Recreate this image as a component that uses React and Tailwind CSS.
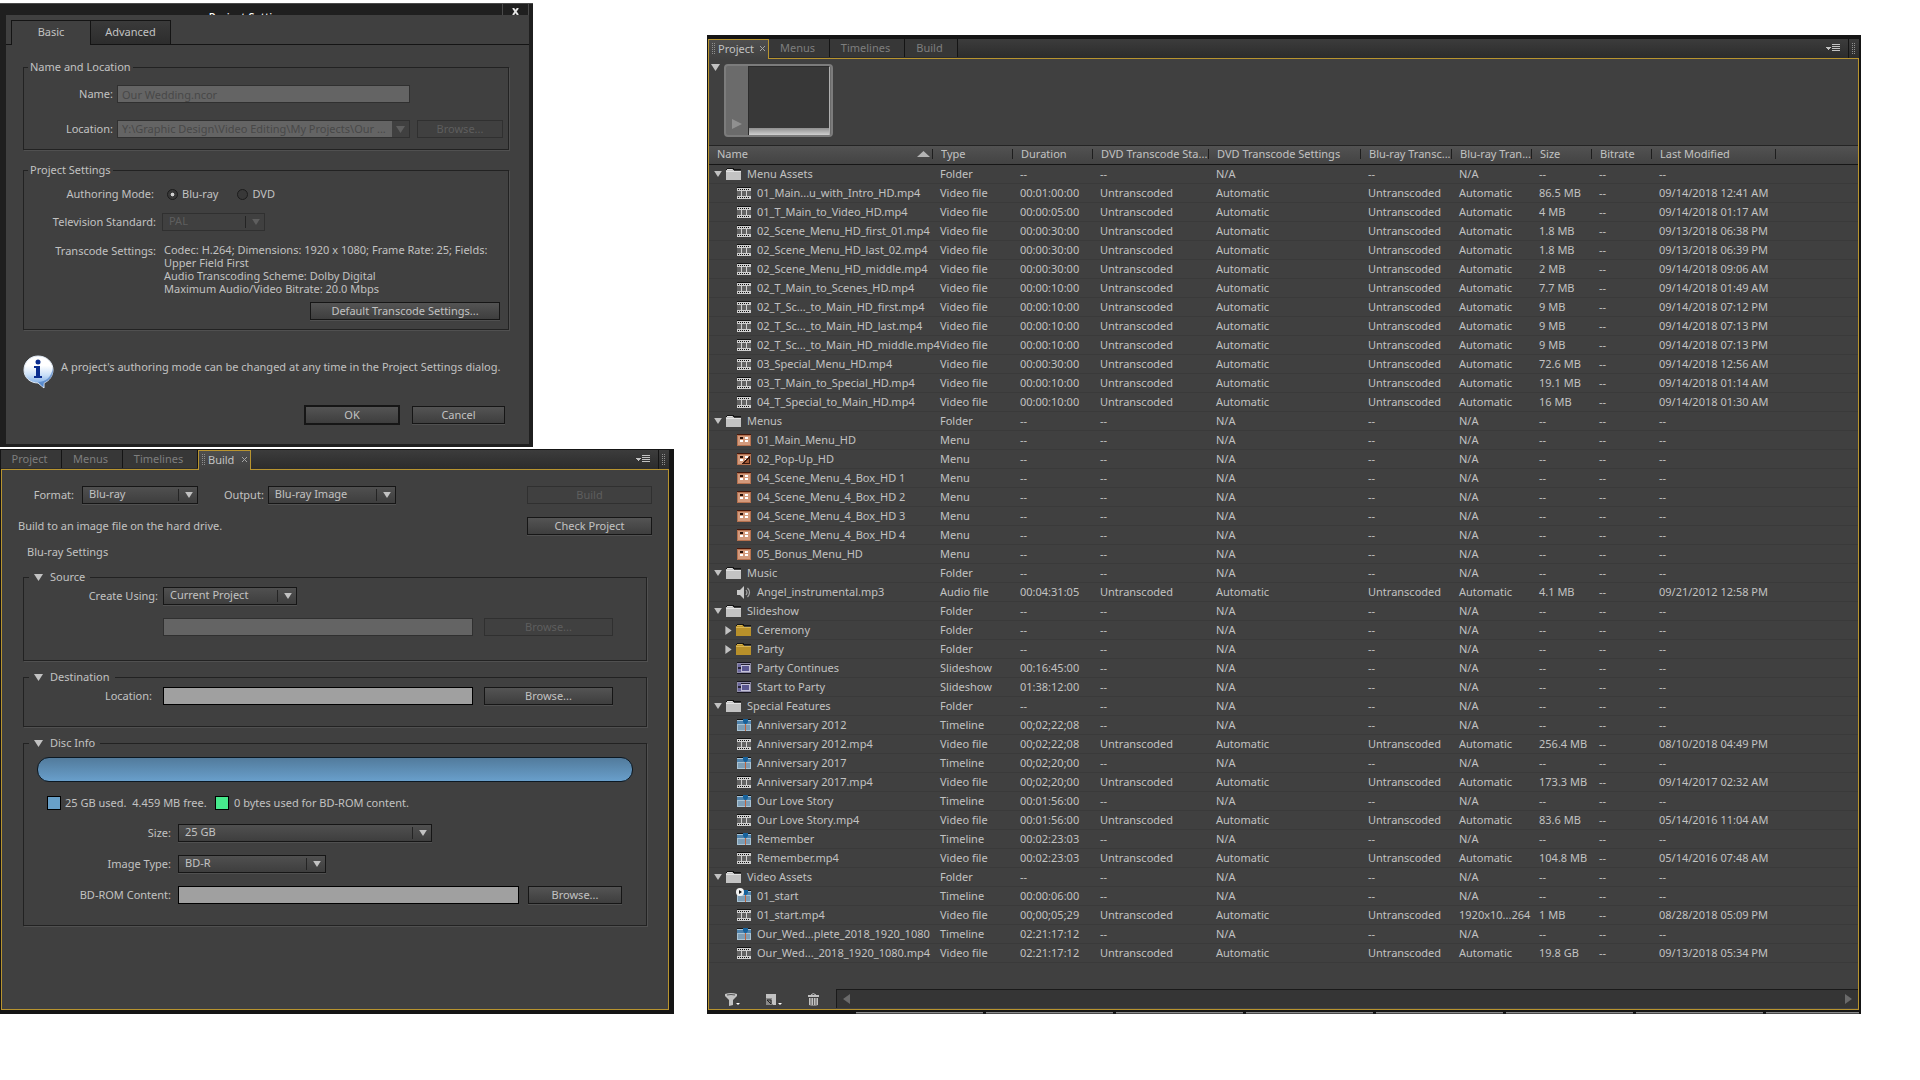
const assets = [
  { kind: 'folder', name: 'Menu Assets' },
  { kind: 'video', name: '01_Main...u_with_Intro_HD.mp4', duration: '00:01:00:00', size: '86.5 MB', modified: '09/14/2018 12:41 AM' },
  { kind: 'video', name: '01_T_Main_to_Video_HD.mp4', duration: '00:00:05:00', size: '4 MB', modified: '09/14/2018 01:17 AM' },
  { kind: 'video', name: '02_Scene_Menu_HD_first_01.mp4', duration: '00:00:30:00', size: '1.8 MB', modified: '09/13/2018 06:38 PM' },
  { kind: 'video', name: '02_Scene_Menu_HD_last_02.mp4', duration: '00:00:30:00', size: '1.8 MB', modified: '09/13/2018 06:39 PM' },
  { kind: 'video', name: '02_Scene_Menu_HD_middle.mp4', duration: '00:00:30:00', size: '2 MB', modified: '09/14/2018 09:06 AM' },
  { kind: 'video', name: '02_T_Main_to_Scenes_HD.mp4', duration: '00:00:10:00', size: '7.7 MB', modified: '09/14/2018 01:49 AM' },
  { kind: 'video', name: '02_T_Sc..._to_Main_HD_first.mp4', duration: '00:00:10:00', size: '9 MB', modified: '09/14/2018 07:12 PM' },
  { kind: 'video', name: '02_T_Sc..._to_Main_HD_last.mp4', duration: '00:00:10:00', size: '9 MB', modified: '09/14/2018 07:13 PM' },
  { kind: 'video', name: '02_T_Sc..._to_Main_HD_middle.mp4', duration: '00:00:10:00', size: '9 MB', modified: '09/14/2018 07:13 PM' },
  { kind: 'video', name: '03_Special_Menu_HD.mp4', duration: '00:00:30:00', size: '72.6 MB', modified: '09/14/2018 12:56 AM' },
  { kind: 'video', name: '03_T_Main_to_Special_HD.mp4', duration: '00:00:10:00', size: '19.1 MB', modified: '09/14/2018 01:14 AM' },
  { kind: 'video', name: '04_T_Special_to_Main_HD.mp4', duration: '00:00:10:00', size: '16 MB', modified: '09/14/2018 01:30 AM' },
  { kind: 'folder', name: 'Menus' },
  { kind: 'menu', name: '01_Main_Menu_HD' },
  { kind: 'popup', name: '02_Pop-Up_HD' },
  { kind: 'menu', name: '04_Scene_Menu_4_Box_HD 1' },
  { kind: 'menu', name: '04_Scene_Menu_4_Box_HD 2' },
  { kind: 'menu', name: '04_Scene_Menu_4_Box_HD 3' },
  { kind: 'menu', name: '04_Scene_Menu_4_Box_HD 4' },
  { kind: 'menu', name: '05_Bonus_Menu_HD' },
  { kind: 'folder', name: 'Music' },
  { kind: 'audio', name: 'Angel_instrumental.mp3', duration: '00:04:31:05', size: '4.1 MB', modified: '09/21/2012 12:58 PM' },
  { kind: 'folder', name: 'Slideshow' },
  { kind: 'subfolder', name: 'Ceremony' },
  { kind: 'subfolder', name: 'Party' },
  { kind: 'slideshow', name: 'Party Continues', duration: '00:16:45:00' },
  { kind: 'slideshow', name: 'Start to Party', duration: '01:38:12:00' },
  { kind: 'folder', name: 'Special Features' },
  { kind: 'timeline', name: 'Anniversary 2012', duration: '00;02;22;08' },
  { kind: 'video', name: 'Anniversary 2012.mp4', duration: '00;02;22;08', size: '256.4 MB', modified: '08/10/2018 04:49 PM' },
  { kind: 'timeline', name: 'Anniversary 2017', duration: '00;02;20;00' },
  { kind: 'video', name: 'Anniversary 2017.mp4', duration: '00;02;20;00', size: '173.3 MB', modified: '09/14/2017 02:32 AM' },
  { kind: 'timeline', name: 'Our Love Story', duration: '00:01:56:00' },
  { kind: 'video', name: 'Our Love Story.mp4', duration: '00:01:56:00', size: '83.6 MB', modified: '05/14/2016 11:04 AM' },
  { kind: 'timeline', name: 'Remember', duration: '00:02:23:03' },
  { kind: 'video', name: 'Remember.mp4', duration: '00:02:23:03', size: '104.8 MB', modified: '05/14/2016 07:48 AM' },
  { kind: 'folder', name: 'Video Assets' },
  { kind: 'firstplay', name: '01_start', duration: '00:00:06:00' },
  { kind: 'video', name: '01_start.mp4', duration: '00;00;05;29', bluray: '1920x10...264', size: '1 MB', modified: '08/28/2018 05:09 PM' },
  { kind: 'timeline', name: 'Our_Wed...plete_2018_1920_1080', duration: '02:21:17:12' },
  { kind: 'video', name: 'Our_Wed..._2018_1920_1080.mp4', duration: '02:21:17:12', size: '19.8 GB', modified: '09/13/2018 05:34 PM' },
]

const typeLabels = {
  folder: 'Folder',
  subfolder: 'Folder',
  video: 'Video file',
  audio: 'Audio file',
  menu: 'Menu',
  popup: 'Menu',
  slideshow: 'Slideshow',
  timeline: 'Timeline',
  firstplay: 'Timeline',
}

const columns = [
  { label: 'Name', width: 'w-[224px]' },
  { label: 'Type', width: 'w-[80px]' },
  { label: 'Duration', width: 'w-[80px]' },
  { label: 'DVD Transcode Sta...', width: 'w-[116px]' },
  { label: 'DVD Transcode Settings', width: 'w-[152px]' },
  { label: 'Blu-ray Transc...', width: 'w-[91px]' },
  { label: 'Blu-ray Tran...', width: 'w-[80px]' },
  { label: 'Size', width: 'w-[60px]' },
  { label: 'Bitrate', width: 'w-[60px]' },
  { label: 'Last Modified', width: 'w-[124px]' },
]

function FolderIcon({ dark, light }) {
  return (
    <svg width="16" height="13" viewBox="0 0 16 13" shapeRendering="crispEdges">
      <path d="M1 0h6l1 1h7v1H0V1z" fill="#151515" />
      <path d="M1 1h6l1 2h7v9H0V2z" fill={dark} />
      <path d="M1 1h5v1H1zM0 3h15v1H0z" fill={light} />
    </svg>
  )
}

function VideoIcon() {
  return (
    <svg width="14" height="13" viewBox="0 0 14 13" shapeRendering="crispEdges">
      <path d="M0 0h14v1H0z" fill="#151515" />
      <path d="M0 1h14v11H0z" fill="#cfcfcf" />
      <path d="M1 2h1v1H1zM3 2h1v1H3zM5 2h1v1H5zM7 2h1v1H7zM9 2h1v1H9zM11 2h1v1h-1zM1 10h1v1H1zM3 10h1v1H3zM5 10h1v1H5zM7 10h1v1H7zM9 10h1v1H9zM11 10h1v1h-1z" fill="#111" />
      <path d="M0 4h4v5H0zM5 4h4v5H5zM10 4h4v5h-4z" fill="#626262" />
    </svg>
  )
}

function MenuIcon({ popup }) {
  return (
    <svg width="14" height="12" viewBox="0 0 14 12" shapeRendering="crispEdges">
      <path d="M0 0h14v12H0z" fill="#b5714f" />
      <path d="M0 0h14v1H0z" fill="#45180c" />
      <path d="M1 2h12v9H1z" fill="#d39a7c" />
      <path d="M3 3h3v2H3z" fill="#2a1008" />
      <path d="M8 3h3v2H8zM3 6h3v2H3zM8 6h3v2H8z" fill="#fff" />
      {popup && (
        <>
          <path d="M13 2v9H5z" fill="#3b1a10" />
          <path d="M12 5v5H7z" fill="#a35c38" />
        </>
      )}
    </svg>
  )
}

function AudioIcon() {
  return (
    <svg width="14" height="13" viewBox="0 0 14 13">
      <path d="M0 4h3l4-4v13L3 9H0z" fill="#c9c9c9" />
      <path d="M9 4q2 2.500 0 5M10.500 2q4 4.500 0 9" fill="none" stroke="#a8a8a8" strokeWidth="1.200" />
    </svg>
  )
}

function SlideshowIcon() {
  return (
    <svg width="14" height="12" viewBox="0 0 14 12" shapeRendering="crispEdges">
      <path d="M0 0h14v12H0z" fill="#17151f" />
      <path d="M0 1h14v10H0z" fill="#8e8ba6" />
      <path d="M1 2h12v8H1z" fill="#252234" />
      <path d="M1 2h3v3H1zM1 7h3v3H1z" fill="#6d69a0" />
      <path d="M4 3h9v7H4z" fill="#c4c1d8" />
      <path d="M5 4h7v5H5z" fill="#5a5690" />
    </svg>
  )
}

function TimelineIcon({ firstPlay }) {
  return (
    <svg width="14" height="13" viewBox="0 0 14 13" overflow="visible">
      <path d="M0 0h14v1H0z" fill="#151515" />
      <path d="M0 1h14v11H0z" fill="#a9c3d4" />
      <path d="M0 2h14v3H0z" fill="#4f83ad" />
      <path d="M1 6h12v5H1z" fill="#7d9db5" />
      <path d="M6 0h5v3L9 5.500H8L6 3z" fill="#17629c" />
      <path d="M8 5h1v7H8z" fill="#c0623b" />
      {firstPlay && (
        <>
          <circle cx="3" cy="2" r="4" fill="#f2f2f2" />
          <path d="M2 0l3 2-3 2z" fill="#111" />
        </>
      )}
    </svg>
  )
}

function AssetIcon({ kind }) {
  if (kind === 'folder') return <FolderIcon dark="#c3c3c3" light="#e2e2e2" />
  if (kind === 'subfolder') return <FolderIcon dark="#b8902a" light="#d8b552" />
  if (kind === 'video') return <VideoIcon />
  if (kind === 'audio') return <AudioIcon />
  if (kind === 'slideshow') return <SlideshowIcon />
  if (kind === 'menu' || kind === 'popup') return <MenuIcon popup={kind === 'popup'} />
  return <TimelineIcon firstPlay={kind === 'firstplay'} />
}

function InfoIcon() {
  return (
    <svg width="32" height="34" viewBox="0 0 32 34" className="shrink-0">
      <defs>
        <linearGradient id="bubble" x1="0" y1="0" x2="0" y2="1">
          <stop offset="0.300" stopColor="#ffffff" />
          <stop offset="0.600" stopColor="#c9dff7" />
          <stop offset="1" stopColor="#5b95dd" />
        </linearGradient>
      </defs>
      <path
        d="M15 1c8.500 0 15 6 15 14 0 6-4 11-9 13v5l-6-5C7 28 1 22.500 1 15 1 7 7 1 15 1z"
        fill="url(#bubble)"
        stroke="#dfe9f5"
        strokeWidth="1"
      />
      <path d="M30 13c1 8-3 12-9 15l-1 4-5-5c8 0 13-5 15-14z" fill="#3f73bd" opacity="0.600" />
      <circle cx="15" cy="7" r="2.500" fill="#0b2e8f" />
      <path d="M11 11h6v10h2v2h-8v-2h2v-8h-2z" fill="#0b2e8f" />
    </svg>
  )
}

function Triangle({ className }) {
  return (
    <svg width="9" height="7" viewBox="0 0 9 7" className={className}>
      <path d="M0 0h9L4.500 7z" fill="currentColor" />
    </svg>
  )
}

function TriangleRight({ className }) {
  return (
    <svg width="7" height="10" viewBox="0 0 7 10" className={className}>
      <path d="M0 0v10l7-5z" fill="currentColor" />
    </svg>
  )
}

function Grip() {
  return (
    <svg width="4" height="12" viewBox="0 0 4 12" shapeRendering="crispEdges" className="shrink-0">
      <path d="M0 0h1v1H0zM2 0h1v1H2zM0 2h1v1H0zM2 2h1v1H2zM0 4h1v1H0zM2 4h1v1H2zM0 6h1v1H0zM2 6h1v1H2zM0 8h1v1H0zM2 8h1v1H2zM0 10h1v1H0zM2 10h1v1H2z" fill="#8f8f8f" />
    </svg>
  )
}

function Button({ className, children, disabled }) {
  return (
    <button
      type="button"
      disabled={disabled}
      className={`shrink-0 border text-center leading-[14px] ${
        disabled
          ? 'border-[#303030] text-[#5e5e5e]'
          : 'border-[#161616] bg-linear-to-b from-[#545454] to-[#3e3e3e] text-[#c2c2c2] shadow-[0_1px_0_#505050]'
      } ${className}`}
    >
      {children}
    </button>
  )
}

function Select({ id, value, className, disabled }) {
  return (
    <div className={`relative h-[18px] shrink-0 ${disabled ? 'text-[#5e5e5e]' : 'text-[#c2c2c2]'} ${className}`}>
      <select
        id={id}
        disabled={disabled}
        defaultValue={value}
        className={`block h-full w-full appearance-none border pb-[2px] pl-[6px] leading-[14px] ${
          disabled ? 'border-[#303030] opacity-100' : 'border-[#161616] bg-linear-to-b from-[#505050] to-[#3e3e3e] shadow-[0_1px_0_#505050]'
        }`}
      >
        <option>{value}</option>
      </select>
      <span className="pointer-events-none absolute inset-y-[3px] right-[5px] flex items-center border-l border-[#242424] pl-[6px]">
        <Triangle className="h-[6px] w-[8px]" />
      </span>
    </div>
  )
}

function TextField({ id, label, className, disabled, value }) {
  return (
    <input
      id={id}
      type="text"
      aria-label={label}
      disabled={disabled}
      defaultValue={value}
      className={`block h-[18px] border px-[4px] leading-4 ${
        disabled ? 'border-[#303030] bg-[#646464] text-[#484848]' : 'border-black bg-[#a0a0a0] text-black'
      } ${className}`}
    />
  )
}

function Group({ title, className, children }) {
  return (
    <fieldset className={`border border-[#222] shadow-[1px_1px_0_#505050] ${className}`}>
      <legend className="ml-[5px] h-4 px-[5px] leading-4">
        <button type="button" className="flex items-center gap-[7px]">
          <Triangle />
          {title}
        </button>
      </legend>
      {children}
    </fieldset>
  )
}

function TabBar({ active }) {
  const tabs = [
    { label: 'Project', width: 'w-[61px]' },
    { label: 'Menus', width: 'w-[61px]' },
    { label: 'Timelines', width: 'w-[75px]' },
    { label: 'Build', width: 'w-[53px]' },
  ]

  return (
    <div className="flex h-[19px] bg-linear-to-b from-[#3c3c3c] to-[#2c2c2c]">
      <div role="tablist" className="flex">
        {tabs.map(({ label, width }) =>
          label === active ? (
            <div key={label} className={`relative z-10 -mb-px flex items-center gap-[2px] border border-b-0 border-[#b8942f] bg-linear-to-b from-[#4e4e4e] to-[#404040] px-[3px] pb-[2px] ${width}`}>
              <Grip />
              <button type="button" role="tab" aria-selected="true">
                {label}
              </button>
              <button type="button" aria-label={`Close ${label}`} className="ml-auto text-[#a5a5a5]">
                <svg width="5" height="5" viewBox="0 0 5 5">
                  <path d="M0 0l5 5M5 0l-5 5" stroke="currentColor" />
                </svg>
              </button>
            </div>
          ) : (
            <button key={label} type="button" role="tab" aria-selected="false" className={`mb-px border-r border-[#141414] bg-[#373737] pr-[3px] text-[#7e7e7e] ${width}`}>
              {label}
            </button>
          ),
        )}
      </div>
      <button type="button" aria-label="Panel menu" className="mr-[8px] ml-auto text-[#c2c2c2]">
        <svg width="14" height="9" viewBox="0 0 14 9" shapeRendering="crispEdges">
          <path d="M0 3h5L2.500 6zM6 0h8v1H6zM6 2h8v1H6zM6 4h8v1H6zM6 6h8v1H6z" fill="currentColor" />
        </svg>
      </button>
      <div className="flex w-[11px] items-center justify-center border-l border-[#141414]">
        <Grip />
      </div>
    </div>
  )
}

function ProjectSettings() {
  return (
    <section className="w-[533px] max-w-full border-t border-[#4a4a4a] bg-[#1f1f1f] pr-[4px] pb-[3px] pl-[6px]">
      <header className="flex h-[11px] overflow-hidden">
        <h1 className="flex-1 pt-[5px] pr-2 text-center leading-4 font-medium text-white">Project Settings</h1>
        <button type="button" aria-label="Close" className="flex w-[27px] justify-center border-x border-[#4a4a4a] pt-[4px]">
          <svg width="8" height="8" viewBox="0 0 8 8">
            <path d="M1 0l5 7M6 0L1 7" stroke="#e4e4e4" strokeWidth="2" />
          </svg>
        </button>
      </header>

      <form className="bg-[#404040] pb-5">
        <div role="tablist" className="flex border-b border-[#141414] pt-[5px] pl-[5px]">
          <button type="button" role="tab" aria-selected="true" className="-mb-px h-[25px] w-[80px] border-x border-t border-[#141414] bg-[#404040] pb-[2px]">
            Basic
          </button>
          <button type="button" role="tab" aria-selected="false" className="h-[24px] w-[80px] border-t border-r border-[#141414] bg-linear-to-b from-[#3a3a3a] to-[#2d2d2d] pb-px">
            Advanced
          </button>
        </div>

        <div className="pt-[14px] pr-5 pl-[17px]">
          <fieldset className="border border-[#222] pb-[11px] shadow-[1px_1px_0_#505050]">
            <legend className="ml-[4px] h-4 px-[2px] leading-4">Name and Location</legend>
            <div className="flex items-center gap-1 pt-[10px]">
              <label htmlFor="project-name" className="w-[89px] text-right">Name:</label>
              <TextField id="project-name" value="Our Wedding.ncor" disabled className="w-[293px]" />
            </div>
            <div className="flex items-center gap-1 pt-[17px]">
              <label htmlFor="project-location" className="w-[89px] text-right">Location:</label>
              <div className="relative h-[18px] w-[293px] text-[#5e5e5e]">
                <select
                  id="project-location"
                  disabled
                  className="block h-full w-full appearance-none border border-[#303030] bg-linear-to-r from-[#646464] from-94% to-[#404040] to-94% pl-[4px] leading-4 text-[#484848] opacity-100"
                >
                  <option>Y:\Graphic Design\Video Editing\My Projects\Our ...</option>
                </select>
                <Triangle className="pointer-events-none absolute top-[6px] right-[5px]" />
              </div>
              <Button disabled className="ml-[3px] h-[18px] w-[86px]">Browse...</Button>
            </div>
          </fieldset>

          <fieldset className="mt-[12px] border border-[#222] pr-[8px] pb-[9px] shadow-[1px_1px_0_#505050]">
            <legend className="ml-[4px] h-4 px-[2px] leading-4">Project Settings</legend>
            <div role="radiogroup" aria-labelledby="authoring-mode" className="mt-[8px] flex h-4 items-center">
              <span id="authoring-mode" className="w-[130px] text-right">Authoring Mode:</span>
              <label className="ml-[13px] flex items-center gap-1">
                <input type="radio" name="mode" defaultChecked className="size-[11px] appearance-none rounded-full border border-[#1c1c1c] bg-[#363636] bg-radial from-[#d0d0d0] from-25% to-[#383838] to-35%" />
                Blu-ray
              </label>
              <label className="ml-[19px] flex items-center gap-1">
                <input type="radio" name="mode" className="size-[11px] appearance-none rounded-full border border-[#1c1c1c] bg-[#383838]" />
                DVD
              </label>
            </div>
            <div className="flex items-center gap-[6px] pt-[11px]">
              <label htmlFor="tv-standard" className="w-[132px] text-right">Television Standard:</label>
              <Select id="tv-standard" value="PAL" disabled className="w-[103px]" />
            </div>
            <div className="flex gap-[8px] pt-[12px] leading-[13px]">
              <span className="w-[132px] shrink-0 pt-px text-right">Transcode Settings:</span>
              <p>
                Codec: H.264; Dimensions: 1920 x 1080; Frame Rate: 25; Fields:<br />
                Upper Field First<br />
                Audio Transcoding Scheme: Dolby Digital<br />
                Maximum Audio/Video Bitrate: 20.0 Mbps
              </p>
            </div>
            <div className="flex justify-end pt-[7px]">
              <Button className="h-[18px] w-[190px]">Default Transcode Settings...</Button>
            </div>
          </fieldset>

          <div className="flex items-center gap-[6px] pt-[25px]">
            <InfoIcon />
            <p className="pb-[10px]">A project's authoring mode can be changed at any time in the Project Settings dialog.</p>
          </div>
          <div className="flex justify-end gap-[13px] pt-[17px] pr-[4px]">
            <Button className="h-[18px] w-[94px] outline outline-[#161616]">OK</Button>
            <Button className="h-[18px] w-[93px]">Cancel</Button>
          </div>
        </div>
      </form>
    </section>
  )
}

function BuildPanel() {
  return (
    <section className="mt-[2px] bg-[#151515] pt-px pr-[5px] pb-[4px] pl-px">
      <TabBar active="Build" />
      <form className="border border-[#b8942f] bg-[#404040] pt-[16px] pb-[83px]">
        <div className="flex items-center pr-4">
          <label htmlFor="format" className="mr-2 w-[72px] text-right">Format:</label>
          <Select id="format" value="Blu-ray" className="w-[116px]" />
          <label htmlFor="output" className="mr-[4px] ml-[26px]">Output:</label>
          <Select id="output" value="Blu-ray Image" className="w-[128px]" />
          <Button disabled className="ml-auto h-[18px] w-[125px]">Build</Button>
        </div>
        <div className="flex items-center justify-between pt-[13px] pr-4 pl-4">
          <p>Build to an image file on the hard drive.</p>
          <Button className="h-[18px] w-[125px]">Check Project</Button>
        </div>
        <h2 className="mt-[9px] pl-[25px] leading-4">Blu-ray Settings</h2>

        <div className="px-[21px]">
          <Group title="Source" className="mt-[9px] pb-[24px]">
            <div className="flex items-center gap-[5px] pt-[2px]">
              <label htmlFor="create-using" className="w-[134px] text-right">Create Using:</label>
              <Select id="create-using" value="Current Project" className="w-[134px]" />
            </div>
            <div className="flex gap-[11px] pt-[13px] pl-[139px]">
              <TextField label="Source path" disabled className="w-[310px]" />
              <Button disabled className="h-[18px] w-[129px]">Browse...</Button>
            </div>
          </Group>

          <Group title="Destination" className="mt-[8px] pb-[21px]">
            <div className="flex items-center gap-[11px] pt-[2px]">
              <label htmlFor="destination" className="w-[128px] text-right">Location:</label>
              <TextField id="destination" className="w-[310px]" />
              <Button className="h-[18px] w-[129px]">Browse...</Button>
            </div>
          </Group>

          <Group title="Disc Info" className="mt-[8px] pb-[21px]">
            <div className="mx-[13px] mt-[6px] h-[25px] rounded-xl border border-[#0c1822] bg-linear-to-b from-[#527b9c] to-[#699fcb]" />
            <div className="flex items-center pt-[13px] pl-[23px] leading-4">
              <span className="mr-[4px] size-[14px] border border-black bg-[#68a0c8]" />
              <span className="w-[150px] whitespace-pre">25 GB used.  4.459 MB free.</span>
              <span className="mr-[5px] size-[14px] border border-black bg-[#47ea8d]" />
              0 bytes used for BD-ROM content.
            </div>
            <div className="flex items-center gap-[7px] pt-[13px]">
              <label htmlFor="disc-size" className="w-[147px] text-right">Size:</label>
              <Select id="disc-size" value="25 GB" className="w-[254px]" />
            </div>
            <div className="flex items-center gap-[7px] pt-[13px]">
              <label htmlFor="image-type" className="w-[147px] text-right">Image Type:</label>
              <Select id="image-type" value="BD-R" className="w-[148px]" />
            </div>
            <div className="flex items-center gap-[7px] pt-[13px]">
              <label htmlFor="bdrom" className="w-[147px] text-right">BD-ROM Content:</label>
              <TextField id="bdrom" className="w-[341px]" />
              <Button className="ml-[2px] h-[18px] w-[94px]">Browse...</Button>
            </div>
          </Group>
        </div>
      </form>
    </section>
  )
}

function AssetRow({ kind, name, duration = '--', bluray = 'Automatic', size = '--', modified = '--' }) {
  const isMedia = kind === 'video' || kind === 'audio'
  const isFolder = kind === 'folder' || kind === 'subfolder'
  const transcode = isMedia ? 'Untranscoded' : '--'
  const cells = [
    typeLabels[kind],
    duration,
    transcode,
    isMedia ? 'Automatic' : 'N/A',
    transcode,
    isMedia ? bluray : 'N/A',
    size,
    '--',
    modified,
  ]

  return (
    <tr>
      <td className="h-[19px] border-b border-[#3a3a3a]">
        <div className="flex items-center pl-px">
          {kind === 'folder' && <Triangle className="mr-[4px] ml-[4px] h-[6px] w-[8px]" />}
          {kind === 'subfolder' && <TriangleRight className="mr-[4px] ml-[15px] h-[9px]" />}
          <span className={`shrink-0 ${isFolder ? 'w-[21px]' : 'ml-[27px] w-5'}`}>
            <AssetIcon kind={kind} />
          </span>
          {name}
        </div>
      </td>
      {cells.map((cell, i) => (
        <td key={i} className="border-b border-[#3a3a3a] pl-[7px]">{cell}</td>
      ))}
      <td className="border-b border-[#3a3a3a]" />
    </tr>
  )
}

function ProjectPanel() {
  return (
    <section className="mt-8 min-w-0 bg-[#151515] pt-[4px] pr-[2px] pl-px">
      <TabBar active="Project" />
      <div className="overflow-hidden border border-[#b8942f] bg-[#404040]">
        <div className="flex h-[86px] items-start gap-[4px] pt-[5px] pl-[2px]">
          <button type="button" aria-label="Toggle preview">
            <Triangle className="h-[7px]" />
          </button>
          <div className="flex h-[73px] w-[109px] rounded-sm border-2 border-[#7c7c7c] bg-[#6b6b6b]">
            <button type="button" aria-label="Play" className="flex w-[22px] items-end justify-center pb-[6px] text-[#909090]">
              <svg width="10" height="10" viewBox="0 0 10 10">
                <path d="M0 0v10l10-5z" fill="currentColor" />
              </svg>
            </button>
            <div className="mr-px flex flex-1 flex-col border-x border-t border-l-[#2c2c2c] border-r-[#b0b0b0] border-t-[#2c2c2c] bg-[#383838]">
              <div className="mt-auto h-[7px] bg-linear-to-b from-[#909090] to-[#cfcfcf]" />
            </div>
          </div>
        </div>

        <table className="w-full table-fixed border-separate border-spacing-0 leading-[18px] whitespace-nowrap">
          <thead>
            <tr>
              {columns.map(({ label, width }, i) => (
                <th key={label} scope="col" className={`h-5 border-t border-b border-t-[#242424] border-b-[#161616] bg-linear-to-b from-[#525252] to-[#434343] p-0 text-left align-top font-normal ${width}`}>
                  <div className="flex h-4 items-center pl-[8px]">
                    <span className="flex-1 overflow-hidden leading-4">{label}</span>
                    {i === 0 && (
                      <svg width="13" height="6" viewBox="0 0 13 6" className="mr-[2px]">
                        <path d="M0 6h13L6.500 0z" fill="#b4b4b4" />
                      </svg>
                    )}
                    <span className="h-[10px] w-px bg-[#1e1e1e]" />
                  </div>
                </th>
              ))}
              <td className="border-t border-b border-t-[#242424] border-b-[#161616] bg-linear-to-b from-[#525252] to-[#434343]" />
            </tr>
          </thead>
          <tbody>
            {assets.map((asset) => (
              <AssetRow key={asset.name} {...asset} />
            ))}
          </tbody>
        </table>

        <footer className="flex items-end pt-[26px] pb-px">
          <div className="flex h-[18px] w-[127px] items-center gap-[26px] pl-[16px] text-[#c2c2c2]">
            <button type="button" aria-label="Filter">
              <svg width="15" height="13" viewBox="0 0 15 13">
                <path d="M0 1q6-2 12 0v2L8 7v5l-4 1V7L0 3z" fill="currentColor" />
                <path d="M2 2q4-1 8 0" stroke="#555" fill="none" />
                <path d="M11 10h4l-2 2z" fill="#fff" />
              </svg>
            </button>
            <button type="button" aria-label="New item">
              <svg width="16" height="13" viewBox="0 0 16 13">
                <path d="M0 1h10v11H7L0 5z" fill="currentColor" />
                <path d="M0 5h6v7H0z" fill="#8a8a8a" />
                <path d="M1 7h4v4z" fill="none" stroke="#222" />
                <path d="M12 10h4l-2 2z" fill="#fff" />
              </svg>
            </button>
            <button type="button" aria-label="Delete">
              <svg width="11" height="13" viewBox="0 0 11 13">
                <path d="M0 2h11v2H0zM1 5h9v7q-4 1-9 0z" fill="currentColor" />
                <path d="M3 2q2-3 5 0" stroke="currentColor" fill="none" />
                <path d="M3 5v7M5.500 5v7M8 5v7" stroke="#5a5a5a" />
              </svg>
            </button>
          </div>
          <div className="flex h-[19px] flex-1 items-center justify-between border-t border-l border-[#1a1a1a] bg-[#353535] px-[6px] text-[#6a6a6a]">
            <TriangleRight className="rotate-180" />
            <TriangleRight />
          </div>
        </footer>
      </div>
      <div className="flex h-[4px] items-end gap-[3px] overflow-hidden pl-[148px]">
        {[1, 2, 3, 4, 5, 6, 7, 8].map((n) => (
          <span key={n} className="h-[2px] w-[127px] shrink-0 border-t border-[#8a8a8a] bg-[#4a4a4a]" />
        ))}
      </div>
    </section>
  )
}

export default function App() {
  return (
    <main className="grid min-h-screen grid-cols-[674fr_1154fr] items-start gap-[33px] bg-white pt-[3px] pr-[59px] font-['Noto_Sans',sans-serif] text-[11px] leading-4 text-[#c2c2c2]">
      <div className="min-w-0">
        <ProjectSettings />
        <BuildPanel />
      </div>
      <ProjectPanel />
    </main>
  )
}
